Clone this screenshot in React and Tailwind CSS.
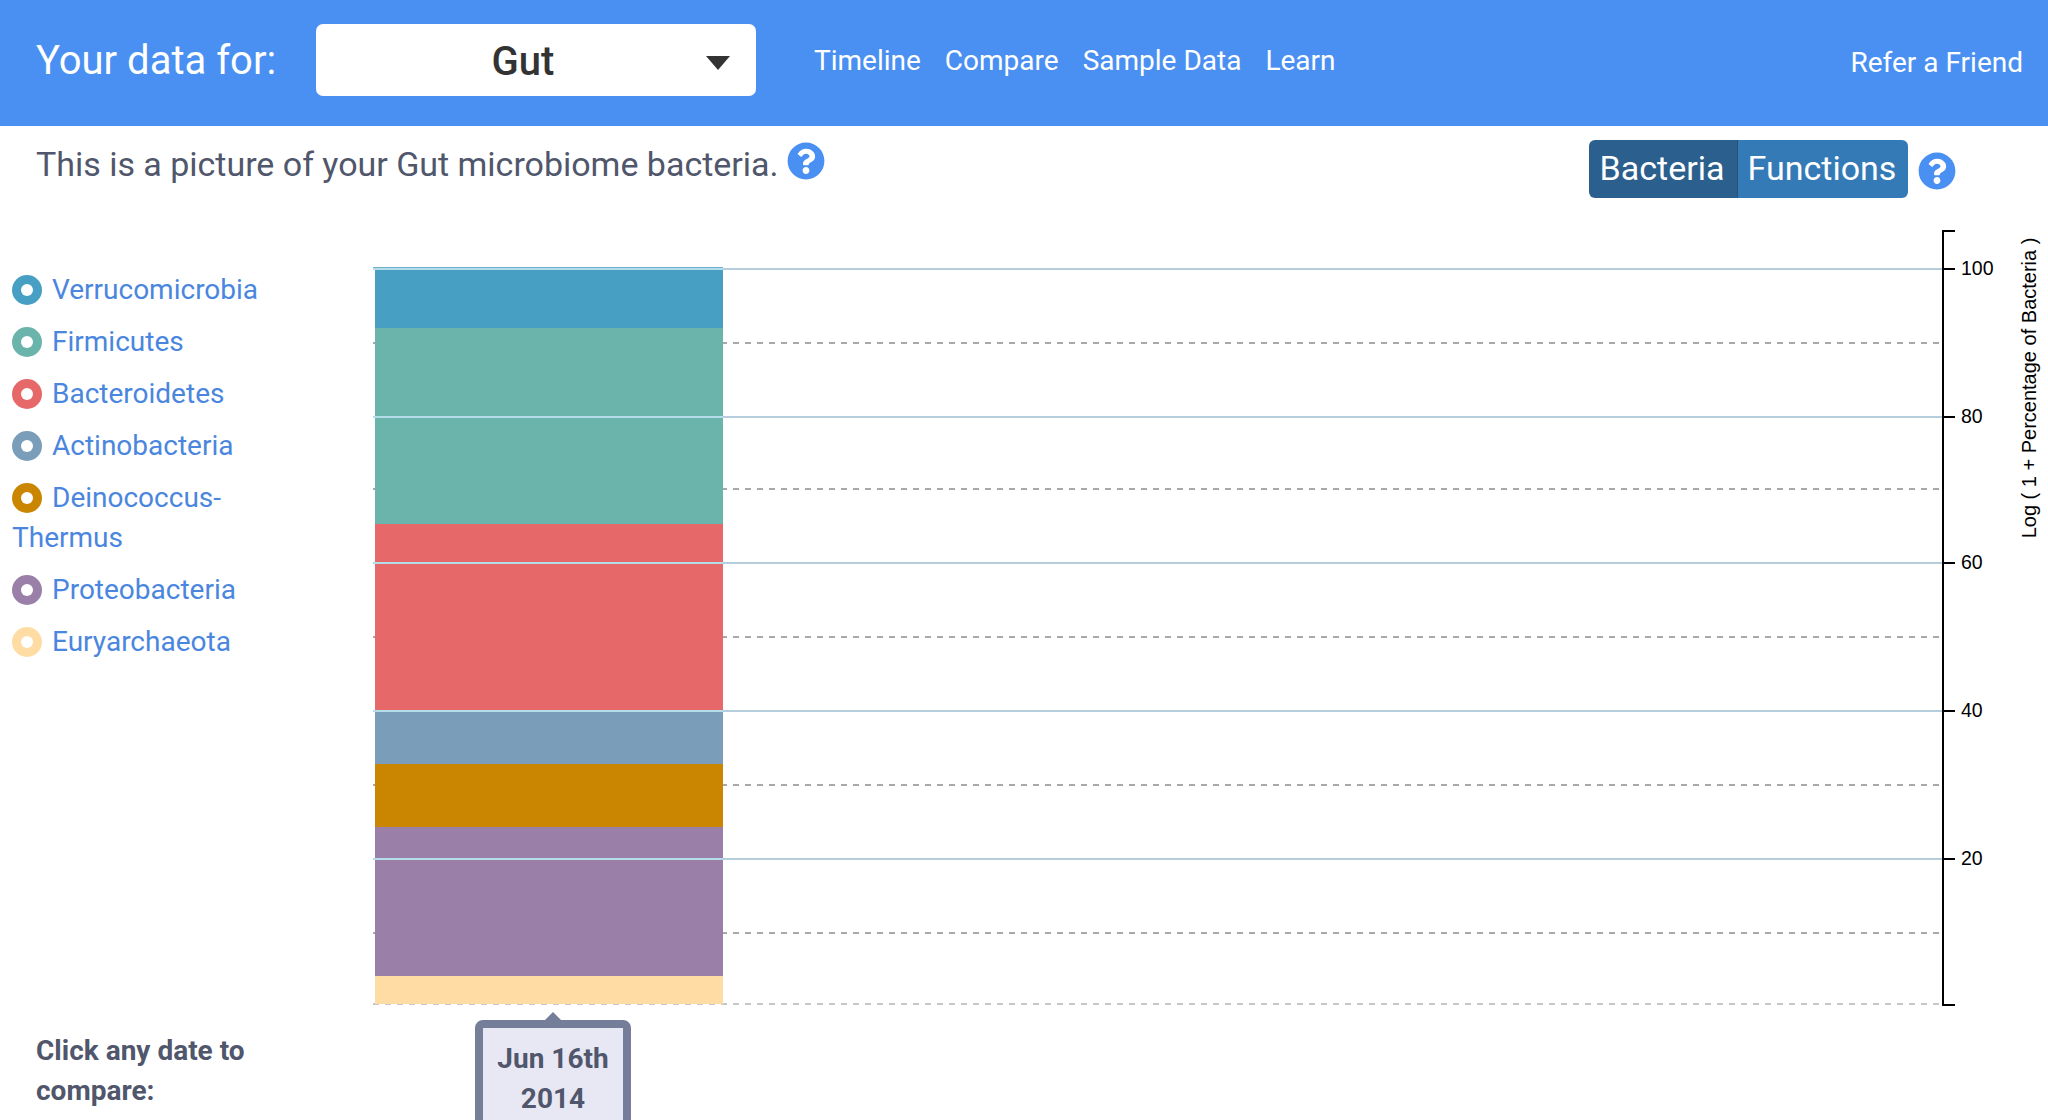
import { FaQuestionCircle } from "react-icons/fa";

const LEGEND = [
  { name: "Verrucomicrobia", color: "bg-[#479fc3]" },
  { name: "Firmicutes", color: "bg-[#6bb4ac]" },
  { name: "Bacteroidetes", color: "bg-[#e76868]" },
  { name: "Actinobacteria", color: "bg-[#7a9eb9]" },
  { name: "Deinococcus-Thermus", color: "bg-[#ca8600]" },
  { name: "Proteobacteria", color: "bg-[#9a7fa9]" },
  { name: "Euryarchaeota", color: "bg-[#ffdca4]" },
];

const BARS = [
  { y: 268, to: 328, fill: "#479fc3" },
  { y: 328, to: 524, fill: "#6bb4ac" },
  { y: 524, to: 711, fill: "#e76868" },
  { y: 711, to: 764, fill: "#7a9eb9" },
  { y: 764, to: 827, fill: "#ca8600" },
  { y: 827, to: 976, fill: "#9a7fa9" },
  { y: 976, to: 1004, fill: "#ffdca4" },
];

const SOLID = [
  { y: 269, label: "100" },
  { y: 417, label: "80" },
  { y: 563, label: "60" },
  { y: 711, label: "40" },
  { y: 859, label: "20" },
];

const DASHED = [343, 489, 637, 785, 933];

function Chart() {
  return (
    <svg width="1688" height="790" viewBox="360 220 1688 790" className="block shrink-0">
      {DASHED.map((y) => (
        <line key={y} x1="373" x2="1943" y1={y} y2={y} stroke="#a8a8a8" strokeWidth="2" strokeDasharray="6 6" />
      ))}
      <line x1="373" x2="1943" y1="1004" y2="1004" stroke="#b4b4b4" strokeWidth="1.5" strokeDasharray="6 6" />
      {BARS.map((b) => (
        <rect key={b.y} x="375" y={b.y} width="348" height={b.to - b.y} fill={b.fill} />
      ))}
      <line x1="373" x2="723" y1="267.5" y2="267.5" stroke="#6fb0cc" strokeWidth="1" />
      {SOLID.map((s) => (
        <g key={s.y}>
          <line x1="373" x2="723" y1={s.y} y2={s.y} stroke="#b4dce9" strokeWidth="2" />
          <line x1="723" x2="1943" y1={s.y} y2={s.y} stroke="#b5cddd" strokeWidth="2" />
          <line x1="1943" x2="1955" y1={s.y} y2={s.y} stroke="#000" strokeWidth="2" />
          <text x="1961" y={s.y + 6} fontSize="19.5" fill="#000" fontFamily="Liberation Sans, sans-serif">
            {s.label}
          </text>
        </g>
      ))}
      <path d="M1955 231H1943V1005H1955" fill="none" stroke="#000" strokeWidth="2" />
      <text
        transform="translate(2036 388) rotate(-90)"
        textAnchor="middle"
        fontSize="20"
        fill="#000"
        fontFamily="Liberation Sans, sans-serif"
      >
        Log ( 1 + Percentage of Bacteria )
      </text>
    </svg>
  );
}

export default function App() {
  return (
    <div className="h-[1120px] overflow-hidden bg-white font-['Roboto',sans-serif]">
      <header className="flex h-[126px] items-center bg-[#4a90f2] pb-[4px] pl-[36px] pr-[25px] text-white">
        <span className="w-[280px] text-[40px] leading-[48px]">Your data for:</span>
        <div className="relative mt-[-2px] flex h-[72px] w-[440px] items-center justify-center rounded-[7px] bg-white pr-[26px] pt-[4px] text-[40px] font-medium text-[#333]">
          Gut
          <svg className="absolute left-[390px] top-[32px]" width="24" height="14" viewBox="0 0 24 14">
            <path d="M0 0H24L12 14Z" fill="#333" />
          </svg>
        </div>
        <nav className="ml-[58px] flex gap-[24px] text-[28px]">
          <a>Timeline</a>
          <a>Compare</a>
          <a>Sample Data</a>
          <a>Learn</a>
        </nav>
        <a className="ml-auto mt-[4px] text-[28px]">Refer a Friend</a>
      </header>

      <div className="flex h-[94px] items-start justify-between pl-[36px] pr-[92px]">
        <div className="flex items-start">
          <p className="mt-[18px] text-[34px] leading-[40px] tracking-[-0.02px] text-[#50566b]">
            This is a picture of your Gut microbiome bacteria.
          </p>
          <FaQuestionCircle className="ml-[9px] mt-[16px] text-[38px] text-[#4a90f2]" />
        </div>
        <div className="mt-[14px] flex items-start">
          <div className="flex h-[58px] overflow-hidden rounded-[6px] text-[34px] text-white">
            <button className="w-[149px] border-r border-[#28527a] bg-[#2b5f8e] pb-[2px] pr-[2px]">Bacteria</button>
            <button className="w-[170px] bg-[#337ab7] pb-[2px] pr-[2px]">Functions</button>
          </div>
          <FaQuestionCircle className="ml-[10px] mt-[12px] text-[38px] text-[#4a90f2]" />
        </div>
      </div>

      <main className="flex">
        <ul className="w-[360px] shrink-0 pl-[12px] pr-[80px] pt-[50px] text-[28px] leading-[40px] text-[#4a86de]">
          {LEGEND.map((item) => (
            <li key={item.name} className="mb-[12px]">
              <span className={`relative top-[-2px] my-[-10px] mr-[10px] inline-flex h-[30px] w-[30px] items-center justify-center rounded-full align-middle ${item.color}`}>
                <span className="h-[12px] w-[12px] rounded-full bg-white" />
              </span>
              {item.name}
            </li>
          ))}
        </ul>
        <Chart />
      </main>

      <div className="flex">
        <p className="w-[475px] shrink-0 pl-[36px] pr-[200px] pt-[21px] text-[28px] font-bold leading-[40px] text-[#50566b]">
          Click any date to compare:
        </p>
        <div className="relative mt-[10px] h-[120px] w-[156px] rounded-[8px] border-[8px] border-[#747e99] bg-[#e8e8f5] pt-[11px] text-center text-[28px] font-bold leading-[40px] text-[#50566b]">
          <span className="absolute left-[62px] top-[-16px] h-0 w-0 border-x-[8px] border-b-[8px] border-x-transparent border-b-[#747e99]" />
          Jun 16th
          <br />
          2014
        </div>
      </div>
    </div>
  );
}
